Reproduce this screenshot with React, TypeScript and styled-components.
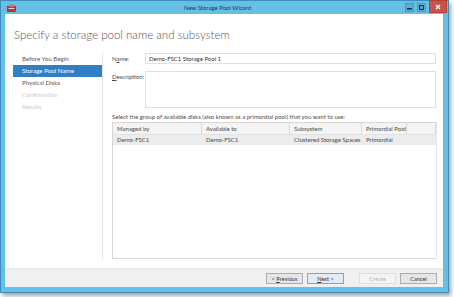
import React from 'react';
import styled, { createGlobalStyle } from 'styled-components';

const Global = createGlobalStyle`
  html, body { margin: 0; padding: 0; background: #fff; }
  body { font-family: Lato, "Open Sans", sans-serif; }
`;

const Page = styled.div`
  width: 454px;
  height: 297px;
  background: #fff;
`;

const Window = styled.div`
  width: 449px;
  height: 293px;
  box-sizing: border-box;
  background: #66bfe6;
  border: 1px solid #3b8dbb;
  box-shadow: 2px 3px 4px rgba(0, 0, 0, 0.35);
  display: flex;
  flex-direction: column;
  padding: 0 5px 5px 4px;
`;

const TitleBar = styled.div`
  height: 13px;
  display: flex;
  align-items: center;
  font-size: 6px;
  color: #1d3a4f;
`;

const Title = styled.div`
  flex: 1;
  text-align: center;
  padding-left: 14px;
`;

const Controls = styled.div`
  display: flex;
  align-self: flex-start;
  gap: 3px;
  margin-right: -4px;
`;

const CtrlBtn = styled.div<{ $close?: boolean }>`
  width: ${p => (p.$close ? '18px' : '9px')};
  height: ${p => (p.$close ? '13px' : '9px')};
  margin-top: ${p => (p.$close ? '-1px' : '2px')};
  background: ${p => (p.$close ? '#c9524a' : '#5aaed6')};
  border: 1px solid ${p => (p.$close ? '#b04038' : '#4a98c0')};
  display: flex;
  align-items: center;
  justify-content: center;
  box-sizing: border-box;
`;

const Client = styled.div`
  flex: 1;
  background: #fff;
  display: flex;
  flex-direction: column;
`;

const Heading = styled.h1`
  margin: 0;
  padding: 14px 0 0 9px;
  height: 28px;
  box-sizing: border-box;
  font-weight: 300;
  font-size: 11.5px;
  line-height: 14px;
  color: #555;
`;

const Body = styled.div`
  flex: 1;
  display: flex;
  padding-top: 11px;
`;

const Nav = styled.div`
  width: 89px;
  border-right: 1px solid #e4e4e4;
  margin-bottom: 8px;
  padding-left: 8px;
`;

const NavItem = styled.div<{ $active?: boolean; $disabled?: boolean }>`
  height: 12px;
  line-height: 12px;
  padding-left: 9px;
  font-size: 6.2px;
  color: ${p => (p.$active ? '#fff' : p.$disabled ? '#cccccc' : '#5a5a5a')};
  background: ${p => (p.$active ? '#2f7fc7' : 'transparent')};
`;

const Content = styled.div`
  flex: 1;
  padding: 0 7px 9px 9px;
  display: flex;
  flex-direction: column;
  font-size: 6px;
  color: #4a4a4a;
`;

const FieldRow = styled.div<{ $tall?: boolean }>`
  display: flex;
  height: ${p => (p.$tall ? '37px' : '11px')};
  margin-bottom: ${p => (p.$tall ? '3px' : '7px')};
`;

const Label = styled.div`
  width: 33px;
  padding-top: 2px;
  white-space: nowrap;
  u { text-decoration: underline; }
`;

const Input = styled.div`
  flex: 1;
  border: 1px solid #e0e0e0;
  box-sizing: border-box;
  padding: 1px 3px;
  color: #333;
  line-height: 8px;
`;

const Prompt = styled.div`
  height: 11px;
  line-height: 11px;
`;

const Table = styled.div`
  flex: 1;
  border: 1px solid #d6d6d6;
  border-right-color: #e8e8e8;
  margin-right: -1px;
  display: flex;
  flex-direction: column;
`;

const Row = styled.div<{ $head?: boolean }>`
  display: grid;
  grid-template-columns: 89px 88px 72px 45px 1fr;
  height: ${p => (p.$head ? '11px' : '10px')};
  background: ${p => (p.$head ? '#f4f4f4' : '#ececec')};
  border-bottom: ${p => (p.$head ? '1px solid #e2e2e2' : 'none')};
  align-items: center;
`;

const Cell = styled.div<{ $head?: boolean }>`
  padding-left: 4px;
  height: 100%;
  line-height: ${p => (p.$head ? '11px' : '10px')};
  border-right: ${p => (p.$head ? '1px solid #dadada' : 'none')};
  white-space: nowrap;
  color: #4a4a4a;
`;

const Footer = styled.div`
  height: 19px;
  background: #f0f0f0;
  border-top: 1px solid #e8e8e8;
  box-sizing: border-box;
  display: flex;
  align-items: center;
  justify-content: flex-end;
  padding: 1px 6px 0 0;
  gap: 4px;
`;

const Button = styled.div<{ $primary?: boolean; $disabled?: boolean; $gap?: boolean }>`
  width: 37px;
  height: 11px;
  box-sizing: border-box;
  border: 1px solid ${p => (p.$primary ? '#7aa7cf' : p.$disabled ? '#dedede' : '#adadad')};
  background: ${p => (p.$primary ? '#e2ebf4' : p.$disabled ? '#f4f4f4' : '#e6e6e6')};
  color: ${p => (p.$disabled ? '#b8b8b8' : '#333')};
  font-size: 5.6px;
  line-height: 9px;
  text-align: center;
  margin-left: ${p => (p.$gap ? '11px' : '0')};
  u { text-decoration: underline; }
`;

const columns = ['Managed by', 'Available to', 'Subsystem', 'Primordial Pool', ''];
const rows = [['Demo-FSC1', 'Demo-FSC1', 'Clustered Storage Spaces', 'Primordial', '']];

const steps = [
  { label: 'Before You Begin' },
  { label: 'Storage Pool Name', active: true },
  { label: 'Physical Disks' },
  { label: 'Confirmation', disabled: true },
  { label: 'Results', disabled: true },
];

const AppIcon = () => (
  <svg width="9" height="8" viewBox="0 0 9 8">
    <rect x="0.5" y="2.5" width="8" height="5" fill="#b83a3a" stroke="#7a2222" strokeWidth="0.6" />
    <rect x="2" y="0.5" width="5" height="2.5" fill="#d87070" />
    <rect x="1.5" y="4" width="6" height="1" fill="#f3c9c9" />
  </svg>
);

const IconSlot = styled.span`
  display: flex;
  margin: 1px 0 0 2px;
`;

export default function App() {
  return (
    <Page>
      <Global />
      <Window>
        <TitleBar>
          <IconSlot>
            <AppIcon />
          </IconSlot>
          <Title>New Storage Pool Wizard</Title>
          <Controls>
            <CtrlBtn>
              <svg width="5" height="5" viewBox="0 0 5 5"><rect x="0" y="3" width="5" height="1.5" fill="#1b2b38" /></svg>
            </CtrlBtn>
            <CtrlBtn>
              <svg width="5" height="5" viewBox="0 0 5 5"><rect x="0.5" y="0.5" width="4" height="4" fill="none" stroke="#1b2b38" strokeWidth="1.2" /></svg>
            </CtrlBtn>
            <CtrlBtn $close>
              <svg width="6" height="6" viewBox="0 0 6 6"><path d="M1 1L5 5M5 1L1 5" stroke="#fff" strokeWidth="1.4" /></svg>
            </CtrlBtn>
          </Controls>
        </TitleBar>
        <Client>
          <Heading>Specify a storage pool name and subsystem</Heading>
          <Body>
            <Nav>
              {steps.map(s => (
                <NavItem key={s.label} $active={s.active} $disabled={s.disabled}>{s.label}</NavItem>
              ))}
            </Nav>
            <Content>
              <FieldRow>
                <Label>N<u>a</u>me:</Label>
                <Input>Demo-FSC1 Storage Pool 1</Input>
              </FieldRow>
              <FieldRow $tall>
                <Label><u>D</u>escription:</Label>
                <Input />
              </FieldRow>
              <Prompt>Select the group of available disks (also known as a primordial pool) that you want to use:</Prompt>
              <Table>
                <Row $head>
                  {columns.map((c, i) => <Cell key={i} $head>{c}</Cell>)}
                </Row>
                {rows.map((r, i) => (
                  <Row key={i}>
                    {r.map((c, j) => <Cell key={j}>{c}</Cell>)}
                  </Row>
                ))}
              </Table>
            </Content>
          </Body>
          <Footer>
            <Button>&lt; <u>P</u>revious</Button>
            <Button $primary><u>N</u>ext &gt;</Button>
            <Button $disabled $gap>Create</Button>
            <Button>Cancel</Button>
          </Footer>
        </Client>
      </Window>
    </Page>
  );
}
